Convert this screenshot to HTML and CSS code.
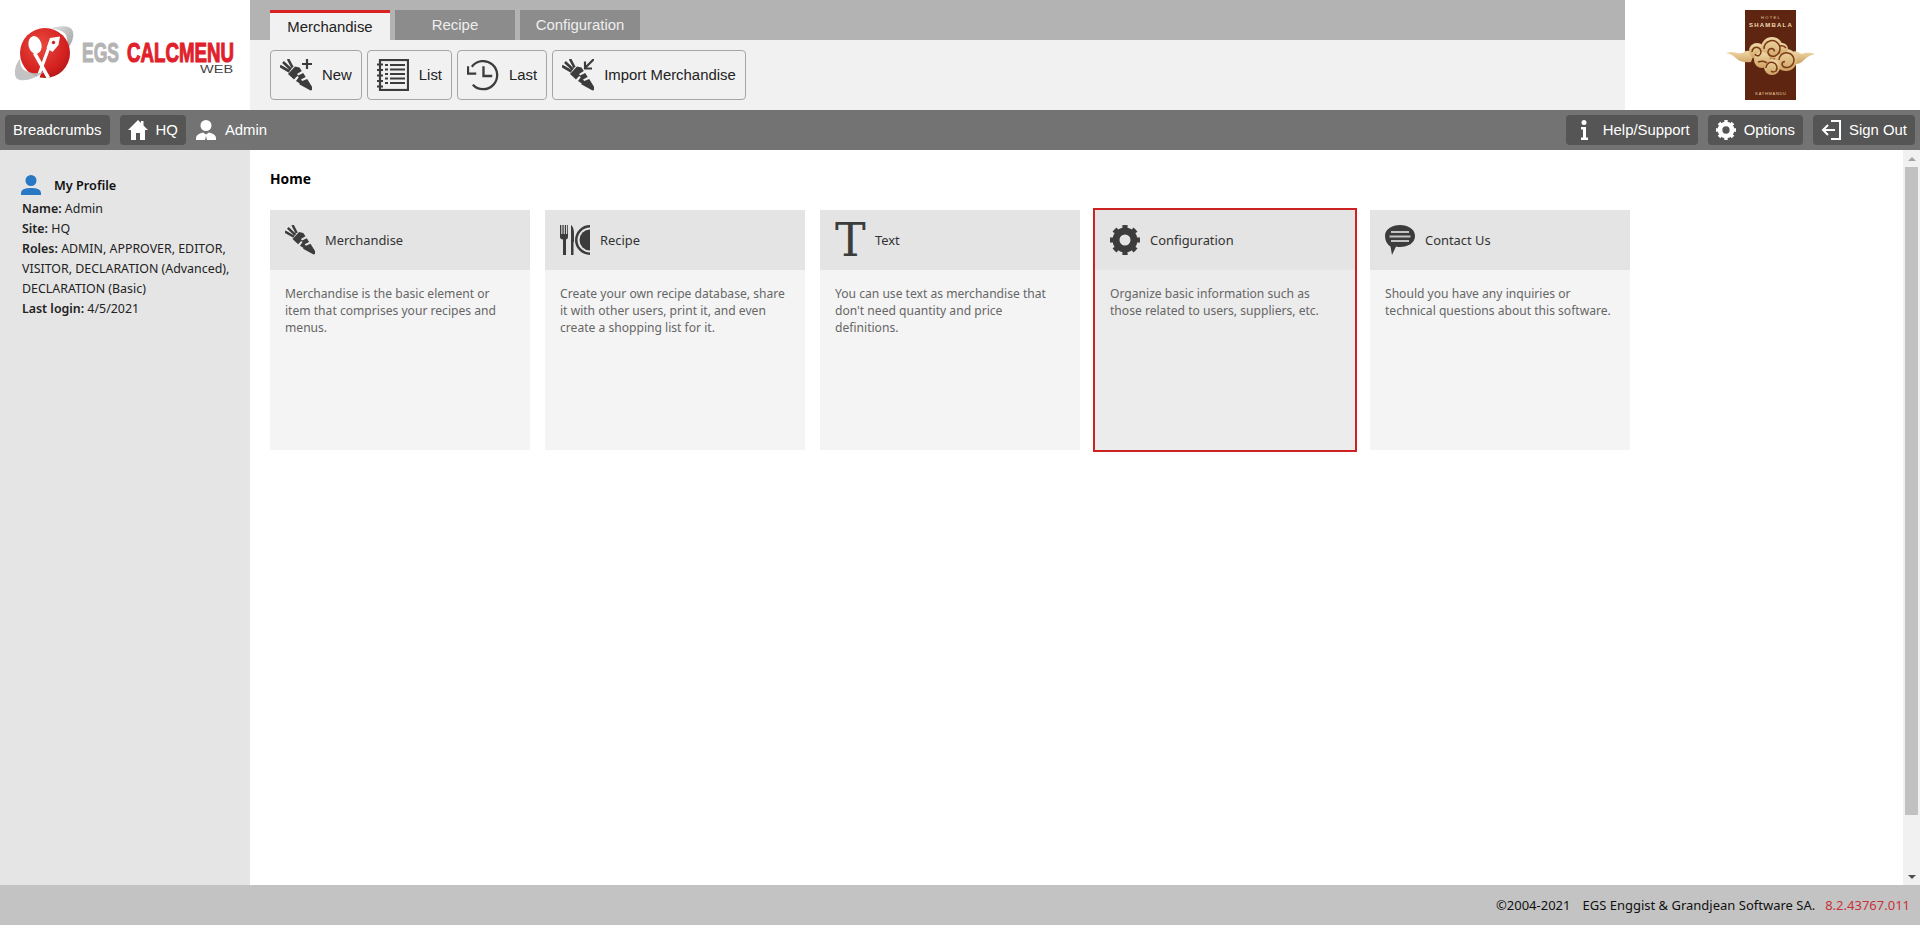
FILE: index.html
```html
<!DOCTYPE html>
<html lang="en">
<head>
<meta charset="utf-8">
<title>EGS CalcMenu Web</title>
<link rel="stylesheet" href="styles.css">
</head>
<body>
<svg class="defs" width="0" height="0" aria-hidden="true">
  <symbol id="carrot" viewBox="0 0 32 32">
    <path fill="currentColor" d="M8 15 15 7.500l4.500 1 2.300 3.500-4.800 3 1.200 1.500 5-2.500 2.500 4-4.700 2.500 1.200 1.500 5-2 5.300 8.500v2.200l-2 .8-11.300-6.300.6-.8-3.800-2.400 2.700-3.800-1.500-1.200-3.200 3.500z"/>
    <path fill="none" stroke="currentColor" stroke-width="2.600" d="M0 7l9.500 5.500M3 3l8 7.500M8 0l4.500 8.500"/>
  </symbol>
  <symbol id="gear" viewBox="0 0 30 30">
    <circle cx="15" cy="15" r="9" fill="none" stroke="currentColor" stroke-width="7"/>
    <circle cx="15" cy="15" r="12.500" fill="none" stroke="currentColor" stroke-width="5" pathLength="8" stroke-dasharray=".5 .5" stroke-dashoffset=".25"/>
  </symbol>
</svg>

<header class="top">
  <div class="brand">
    <svg class="brand-logo" viewBox="0 0 250 110" width="250" height="110" role="img">
      <defs>
        <radialGradient id="sphere" cx=".4" cy=".35" r=".75">
          <stop offset="0" stop-color="#ea4a40"/><stop offset=".7" stop-color="#d3201f"/><stop offset="1" stop-color="#a81517"/>
        </radialGradient>
        <linearGradient id="ringfill" x1="0" y1="0" x2="1" y2="1">
          <stop offset="0" stop-color="#e2e2e2"/><stop offset="1" stop-color="#9c9c9c"/>
        </linearGradient>
      </defs>
      <path d="M50 28.500Q70 23 73 31.500 75 40 66 51 69 38 65 33.500 60 29 50 28.500z" fill="url(#ringfill)"/>
      <circle cx="45" cy="53" r="25" fill="url(#sphere)"/>
      <ellipse cx="35" cy="45" rx="6.500" ry="9" transform="rotate(-14 35 45)" fill="#fff"/>
      <path d="M36 52l14 25-3 2-14-25z" fill="#fff"/>
      <path d="M50 49 39 79l-3-1 11-30z" fill="#fff"/>
      <path d="M46.500 48l3.500-10 10-1.500-1.500 8.500-6 7z" fill="#fff"/>
      <circle cx="53.500" cy="42.500" r="1.700" fill="#d3201f"/>
      <path d="M15 74Q14 66 20.500 58 19 66 24 70 32 75 44 72 30 82 20 80 15 79 15 74z" fill="#bdbdbd" fill-opacity=".9"/>
      <text transform="translate(82 62) scale(.626 1)" class="logo-word logo-egs">EGS</text>
      <text transform="translate(127 62) scale(.668 1)" class="logo-word logo-calc">CALCMENU</text>
      <text transform="translate(200 73) scale(1.32 1)" class="logo-web">WEB</text>
    </svg>
  </div>
  <div class="ribbon">
    <nav class="tabs">
      <a class="tab tab-active">Merchandise</a>
      <a class="tab">Recipe</a>
      <a class="tab">Configuration</a>
    </nav>
    <div class="tools">
      <button class="tool">
        <svg class="tool-icon" viewBox="0 0 32 32"><use href="#carrot"/><path d="M27 0v10M22 5h10" stroke="currentColor" stroke-width="2.200"/></svg>New
      </button>
      <button class="tool">
        <svg class="tool-icon" viewBox="0 0 32 32" fill="none" stroke="currentColor">
          <rect x="3" y="1" width="28" height="30" stroke-width="2.200"/>
          <path stroke-width="2" d="M0 5.500h6M0 11h6M0 16.500h6M0 22h6M0 27.500h6"/>
          <path stroke-width="2" d="M8 6h3M8 10.500h3M8 15h3M8 19.500h3M8 24h3M13 6h15M13 10.500h15M13 15h15M13 19.500h15M13 24h15"/>
        </svg>List
      </button>
      <button class="tool">
        <svg class="tool-icon" viewBox="0 0 33 32" fill="none" stroke="currentColor" stroke-width="2.400">
          <path d="M5 7.500A14.500 14.500 0 1 1 6 26"/>
          <path d="M1 7v7.500h8.500"/>
          <path d="M17 7v10h9"/>
        </svg>Last
      </button>
      <button class="tool">
        <svg class="tool-icon" viewBox="0 0 32 32"><use href="#carrot"/><path d="M32 0l-9 9M23 2.500V9.500H30" fill="none" stroke="currentColor" stroke-width="2.200"/></svg>Import Merchandise
      </button>
    </div>
  </div>
  <div class="hotel">
    <svg class="hotel-logo" viewBox="0 0 90 90" width="90" height="90" role="img">
      <defs>
        <linearGradient id="cloudfill" x1="0" y1="0" x2="0" y2="1">
          <stop offset="0" stop-color="#f0d9a6"/><stop offset="1" stop-color="#cfa264"/>
        </linearGradient>
      </defs>
      <rect x="19" width="51" height="90" fill="#5e2510"/>
      <text x="45" y="9" class="hotel-small hotel-top" text-anchor="middle">HOTEL</text>
      <text x="45" y="17" class="hotel-name" text-anchor="middle">SHAMBALA</text>
      <text x="45" y="85" class="hotel-small hotel-city" text-anchor="middle">KATHMANDU</text>
      <g fill="url(#cloudfill)">
        <path d="M0 43q6-2 11 0 5 1 9-2 5-1 8 3l-3 8q-9 1-14-3-5-5-11-6zM89 44q-5-2-10-1-4 2-7-1-5-2-9 2l1 9q9 3 14-3 5-5 11-6z"/>
        <circle cx="31" cy="41" r="8"/><circle cx="46" cy="38" r="11"/><circle cx="60" cy="50" r="11"/><circle cx="46" cy="57" r="8"/><circle cx="36" cy="50" r="8"/><circle cx="56" cy="39" r="6"/>
      </g>
      <g fill="none" stroke="#7a3a16" stroke-width="1.500">
        <path d="M26 42a4.500 4.500 0 1 1 7 3.500q-3 1-4-1.500"/>
        <path d="M38 39a8 8 0 1 1 11 7q-6 1-7-3.500 0-4 4-4 3 1 2 3"/>
        <path d="M53 50a7.500 7.500 0 1 1 9 7.500q-5 .5-6-3 0-3 3-3"/>
        <path d="M40 58a5.500 5.500 0 1 1 10 3q-3 2-5 0"/>
        <path d="M32 52q6-2 9 1M54 36q4-1 6 2"/>
      </g>
    </svg>
  </div>
</header>

<nav class="bar">
  <a class="pill">Breadcrumbs</a>
  <a class="pill pill-home">
    <svg class="bar-icon" viewBox="0 0 20 20"><path fill="currentColor" d="M10 0 0 10h3v10h5v-7h4v7h5V10h3l-4.500-4.500V1h-2.500v2z"/></svg>HQ
  </a>
  <span class="who">
    <svg class="bar-icon" viewBox="0 0 20 20"><circle cx="10" cy="5.500" r="5.500" fill="currentColor"/><path fill="currentColor" d="M0 20v-2q0-4 7-5.500l3 2 3-2q7 1.500 7 5.500v2h-9l-1-4-1 4z"/></svg>Admin
  </span>
  <span class="bar-fill"></span>
  <a class="pill pill-help">
    <svg class="bar-icon" viewBox="0 0 20 20"><circle cx="10" cy="2.500" r="2.500" fill="currentColor"/><path fill="currentColor" d="M7 7h5v10.500h2V20H7v-2.500h2V9.500H7z"/></svg>Help/Support
  </a>
  <a class="pill">
    <svg class="bar-icon" viewBox="0 0 30 30"><use href="#gear"/></svg>Options
  </a>
  <a class="pill">
    <svg class="bar-icon" viewBox="0 0 20 20" fill="none" stroke="currentColor" stroke-width="2"><path d="M10 1h9v18h-9"/><path d="M14 10H2M7 5l-5 5 5 5"/></svg>Sign Out
  </a>
</nav>

<div class="body">
  <aside class="side">
    <h2 class="side-title">
      <svg class="side-icon" viewBox="0 0 20 20"><circle cx="10" cy="5.500" r="5.500" fill="#2878c4"/><path fill="#2878c4" d="M0 20v-2q0-5 10-5t10 5v2z"/></svg>My Profile
    </h2>
    <p class="side-line"><b>Name:</b> Admin</p>
    <p class="side-line"><b>Site:</b> HQ</p>
    <p class="side-line"><b>Roles:</b> ADMIN, APPROVER, EDITOR, VISITOR, DECLARATION (Advanced), DECLARATION (Basic)</p>
    <p class="side-line"><b>Last login:</b> 4/5/2021</p>
  </aside>
  <main class="main">
    <h1 class="home">Home</h1>
    <section class="cards">
      <article class="card">
        <header class="card-head">
          <svg class="card-icon" viewBox="0 0 32 32"><use href="#carrot"/></svg>
          <span class="card-title">Merchandise</span>
        </header>
        <p class="card-text">Merchandise is the basic element or item that comprises your recipes and menus.</p>
      </article>
      <article class="card">
        <header class="card-head">
          <svg class="card-icon" viewBox="0 0 30 30">
            <path fill="currentColor" d="M0 0h1.300v9h1.100V0h1.300v9h1.100V0h1.300v9h1.100V0H8v12q0 2-2 2.500V30H3V14.500Q0 14 0 12zM11 0q3 2 3 9v8h-.5V30H11z"/>
            <path fill="currentColor" d="M30 0v2.500a12.500 12.500 0 0 0 0 25V30a15 15 0 0 1 0-30z"/>
            <path fill="currentColor" d="M30 4.500v21a10.500 10.500 0 0 1 0-21z"/>
          </svg>
          <span class="card-title">Recipe</span>
        </header>
        <p class="card-text">Create your own recipe database, share it with other users, print it, and even create a shopping list for it.</p>
      </article>
      <article class="card">
        <header class="card-head">
          <span class="card-icon card-glyph">T</span>
          <span class="card-title">Text</span>
        </header>
        <p class="card-text">You can use text as merchandise that don't need quantity and price definitions.</p>
      </article>
      <article class="card card-hover">
        <header class="card-head">
          <svg class="card-icon" viewBox="0 0 30 30"><use href="#gear"/></svg>
          <span class="card-title">Configuration</span>
        </header>
        <p class="card-text">Organize basic information such as those related to users, suppliers, etc.</p>
      </article>
      <article class="card">
        <header class="card-head">
          <svg class="card-icon" viewBox="0 0 30 30">
            <path fill="currentColor" d="M15 0c8 0 15 4 15 11s-7 11-15 11q-2 0-4-.5L7 30l-1.500-8.500Q0 18 0 11C0 4 7 0 15 0z"/>
            <path d="M6 7h18M4.500 11.500h21M6 16h18" stroke="#c4c4c4" stroke-width="1.800"/>
          </svg>
          <span class="card-title">Contact Us</span>
        </header>
        <p class="card-text">Should you have any inquiries or technical questions about this software.</p>
      </article>
    </section>
  </main>
  <div class="scroll" aria-hidden="true">
    <span class="scroll-btn"><i class="arrow-up"></i></span>
    <span class="scroll-track"><span class="scroll-thumb"></span></span>
    <span class="scroll-btn"><i class="arrow-down"></i></span>
  </div>
</div>

<footer class="foot">
  <span class="copy">©2004-2021</span>
  <span>EGS Enggist &amp; Grandjean Software SA.</span>
  <span class="version">8.2.43767.011</span>
</footer>
</body>
</html>
```

FILE: styles.css
```css
* { box-sizing: border-box; }
html, body { height: 100%; }
body {
  margin: 0;
  display: flex;
  flex-direction: column;
  height: 925px;
  overflow: hidden;
  background: #fff;
  font-family: "Liberation Sans", Arial, sans-serif;
  font-size: 14.9px;
  color: #222;
}
.defs { position: absolute; }

.top { display: flex; height: 110px; flex: none; }
.brand { width: 250px; flex: none; background: #fff; }
.brand-logo { display: block; }
.logo-word { font: bold 28px "Liberation Sans", sans-serif; stroke-width: 1.100px; }
.logo-egs { fill: #b4b4b4; stroke: #b4b4b4; }
.logo-calc { fill: #e0202a; stroke: #e0202a; }
.logo-web { font: 11px "Liberation Sans", sans-serif; fill: #444; }

.ribbon { flex: 1; background: #f1f1f1; }
.tabs {
  display: flex;
  gap: 5px;
  height: 40px;
  padding: 10px 0 0 20px;
  background: #b3b3b3;
}
.tab {
  width: 120px;
  height: 30px;
  display: flex;
  align-items: center;
  justify-content: center;
  background: #8c8c8c;
  color: #eee;
}
.tab-active {
  background: #f1f1f1;
  color: #222;
  border-top: 3px solid #da2222;
}
.tools { display: flex; gap: 5px; padding: 10px 0 0 20px; }
.tool {
  display: flex;
  align-items: center;
  gap: 10px;
  height: 50px;
  padding: 0 9px;
  background: #f1f1f1;
  border: 1px solid #a6a6a6;
  border-radius: 4px;
  font: inherit;
  color: #222;
}
.tool-icon { width: 32px; height: 32px; color: #3c3c3c; }

.hotel { width: 295px; flex: none; display: flex; justify-content: center; align-items: center; background: #fff; padding-right: 4px; }
.hotel-logo { display: block; }
.hotel-small { font: 4px "Liberation Sans", sans-serif; fill: #e8cfa0; }
.hotel-top { letter-spacing: 1.300px; }
.hotel-city { letter-spacing: .7px; }
.hotel-name { font: bold 6px "Liberation Sans", sans-serif; fill: #f0dcb4; letter-spacing: 1.200px; }

.bar {
  display: flex;
  align-items: center;
  gap: 10px;
  height: 40px;
  flex: none;
  padding: 0 5px;
  background: #737373;
  color: #fff;
}
.pill {
  display: flex;
  align-items: center;
  gap: 8px;
  height: 30px;
  padding: 0 8px;
  background: #555;
  border-radius: 4px;
}
.pill-help { gap: 9px; }
.who { display: flex; align-items: center; gap: 9px; }
.bar-icon { width: 20px; height: 20px; flex: none; }
.bar-fill { flex: 1; }

.body { flex: 1; display: flex; min-height: 0; }
.side {
  width: 250px;
  flex: none;
  padding: 21px 10px 0 22px;
  background: #e5e5e5;
  font-family: "Noto Sans", sans-serif;
  font-size: 12.4px;
  line-height: 20px;
  color: #222;
}
.side-title {
  display: flex;
  align-items: center;
  gap: 13px;
  margin: 0 0 0 -1px;
  height: 28px;
  font-size: 12.7px;
  font-weight: 600;
  color: #111;
}
.side-icon { width: 20px; height: 20px; flex: none; }
.side-line { margin: 0; }
.side-line b { font-weight: 600; }

.main { flex: 1; padding: 20px; min-width: 0; }
.home {
  margin: 0 0 23px;
  height: 17px;
  font-family: "Noto Sans", sans-serif;
  font-size: 13.8px;
  line-height: 17px;
  font-weight: 700;
  color: #000;
}
.cards { display: flex; gap: 15px; }
.card { width: 260px; height: 240px; background: #f4f4f4; }
.card-hover { background: #ececec; outline: 2px solid #cc2222; }
.card-head {
  display: flex;
  align-items: center;
  gap: 10px;
  height: 60px;
  padding-left: 15px;
  background: #e4e4e4;
}
.card-icon { width: 30px; height: 30px; flex: none; color: #3c3c3c; }
.card-glyph {
  display: block;
  font: 46px/30px "DejaVu Serif", serif;
  text-align: center;
  overflow: visible;
}
.card-title { font-family: "Noto Sans", sans-serif; font-size: 12.9px; color: #333; }
.card-text {
  margin: 0;
  padding: 15px 15px 0;
  font-family: "Noto Sans", sans-serif;
  font-size: 12.1px;
  line-height: 17px;
  color: #666;
}

.scroll { width: 17px; flex: none; display: flex; flex-direction: column; background: #f1f1f1; }
.scroll-btn { height: 17px; flex: none; display: flex; align-items: center; justify-content: center; }
.scroll-track { flex: 1; padding: 0 2px; }
.scroll-thumb { display: block; height: 648px; background: #c1c1c1; }
.arrow-up { border: 4px solid transparent; border-top: 0; border-bottom: 4px solid #a3a3a3; }
.arrow-down { border: 4px solid transparent; border-bottom: 0; border-top: 4px solid #505050; }

.foot {
  display: flex;
  justify-content: flex-end;
  align-items: center;
  gap: 10px;
  height: 40px;
  flex: none;
  padding-right: 10px;
  background: #c3c3c3;
  font-family: "Noto Sans", sans-serif;
  font-size: 13px;
  color: #111;
}
.copy { margin-right: 2px; }
.version { color: #c8323a; }
```
